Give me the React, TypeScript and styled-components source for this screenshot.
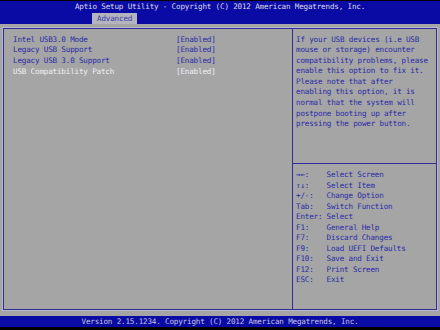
import React from "react";
import styled, { createGlobalStyle } from "styled-components";

const GRAY = "#a5a5a5";
const BLUE = "#0a0aa4";
const TEXT_BLUE = "#2a2aa6";
const LINE = "#2e2e96";

const Global = createGlobalStyle`
  html, body { margin: 0; padding: 0; background: #000; }
  body { width: 440px; height: 330px; overflow: hidden; }
  * { box-sizing: border-box; }
`;

const Screen = styled.div`
  width: 440px;
  height: 330px;
  display: flex;
  flex-direction: column;
  background: #000;
  font-family: "DejaVu Sans Mono", "Liberation Mono", monospace;
  font-size: 7.6px;
  letter-spacing: -0.175px;
  line-height: 10.6px;
`;

const Header = styled.header`
  margin-top: 1px;
  height: 23px;
  background: ${BLUE};
  display: flex;
  flex-direction: column;
`;

const Title = styled.div`
  height: 12px;
  padding-top: 1px;
  text-align: center;
  color: #dcdce4;
  white-space: pre;
`;

const TabRow = styled.div`
  display: flex;
  padding-left: 92px;
  align-items: flex-end;
  flex: 1;
`;

const Tab = styled.div`
  height: 11px;
  line-height: 11px;
  padding: 0 5px;
  background: #b4b4bc;
  color: #3a3ab0;
`;

const Body = styled.main`
  flex: 1;
  background: ${GRAY};
  padding: 4px 3px 6px 3px;
  display: flex;
`;

const Frame = styled.div`
  flex: 1;
  display: flex;
  border: 1px solid ${LINE};
  box-shadow: 0 0 0 1px #b8b8cc;
`;

const Settings = styled.div`
  width: 288px;
  padding: 5.5px 0 0 9px;
  display: flex;
  flex-direction: column;
`;

const Item = styled.div<{ $active?: boolean }>`
  display: flex;
  height: 10.9px;
  color: ${(p) => (p.$active ? "#f0f0f4" : TEXT_BLUE)};
  white-space: pre;
`;

const Label = styled.span`
  width: 163px;
`;

const Value = styled.span``;

const Side = styled.div`
  flex: 1;
  display: flex;
  flex-direction: column;
  border-left: 1px solid ${LINE};
`;

const Help = styled.div`
  height: 135px;
  padding: 5.5px 0 0 3px;
  color: ${TEXT_BLUE};
  white-space: pre;
  border-bottom: 1px solid ${LINE};
`;

const Keys = styled.div`
  padding: 6px 0 0 3px;
  color: ${TEXT_BLUE};
  display: flex;
  flex-direction: column;
`;

const KeyRow = styled.div`
  display: flex;
  height: 10.5px;
  white-space: pre;
`;

const KeyName = styled.span`
  width: 30.5px;
`;

const Footer = styled.footer`
  height: 11px;
  background: ${BLUE};
  color: #c4c4dc;
  text-align: center;
  line-height: 11px;
  white-space: pre;
`;

const Bottom = styled.div`
  height: 3px;
  background: #000;
`;

const items = [
  ["Intel USB3.0 Mode", "[Enabled]"],
  ["Legacy USB Support", "[Enabled]"],
  ["Legacy USB 3.0 Support", "[Enabled]"],
  ["USB Compatibility Patch", "[Enabled]"],
];

const helpLines = [
  "If your USB devices (i.e USB",
  "mouse or storage) encounter",
  "compatibility problems, please",
  "enable this option to fix it.",
  "Please note that after",
  "enabling this option, it is",
  "normal that the system will",
  "postpone booting up after",
  "pressing the power button.",
];

const keys = [
  ["\u2192\u2190:", "Select Screen"],
  ["\u2191\u2193:", "Select Item"],
  ["+/-:", "Change Option"],
  ["Tab:", "Switch Function"],
  ["Enter:", "Select"],
  ["F1:", "General Help"],
  ["F7:", "Discard Changes"],
  ["F9:", "Load UEFI Defaults"],
  ["F10:", "Save and Exit"],
  ["F12:", "Print Screen"],
  ["ESC:", "Exit"],
];

export default function App() {
  return (
    <Screen>
      <Global />
      <Header>
        <Title>Aptio Setup Utility - Copyright (C) 2012 American Megatrends, Inc.</Title>
        <TabRow>
          <Tab>Advanced</Tab>
        </TabRow>
      </Header>
      <Body>
        <Frame>
          <Settings>
            {items.map(([l, v], i) => (
              <Item key={l} $active={i === 3}>
                <Label>{l}</Label>
                <Value>{v}</Value>
              </Item>
            ))}
          </Settings>
          <Side>
            <Help>{helpLines.join("\n")}</Help>
            <Keys>
              {keys.map(([k, d]) => (
                <KeyRow key={k}>
                  <KeyName>{k}</KeyName>
                  <span>{d}</span>
                </KeyRow>
              ))}
            </Keys>
          </Side>
        </Frame>
      </Body>
      <Footer>Version 2.15.1234. Copyright (C) 2012 American Megatrends, Inc.</Footer>
      <Bottom />
    </Screen>
  );
}
